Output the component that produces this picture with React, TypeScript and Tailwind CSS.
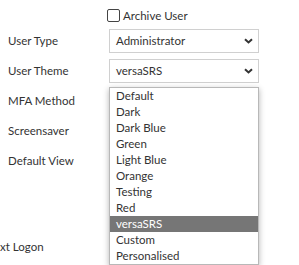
import { useState } from "react";

const THEMES = [
  "Default",
  "Dark",
  "Dark Blue",
  "Green",
  "Light Blue",
  "Orange",
  "Testing",
  "Red",
  "versaSRS",
  "Custom",
  "Personalised",
];

function Chevron() {
  return (
    <svg width="9" height="6" viewBox="0 0 9 6" className="shrink-0">
      <path d="M1 1.2 L4.5 4.5 L8 1.2" fill="none" stroke="#333" strokeWidth="2" />
    </svg>
  );
}

function SelectBox({ value }: { value: string }) {
  return (
    <div className="h-[24px] w-[150px] border border-[#d0d0d0] bg-white flex items-center justify-between pl-[6px] pr-[5px] text-[#333]">
      <span>{value}</span>
      <Chevron />
    </div>
  );
}

export default function App() {
  const [theme] = useState("versaSRS");

  return (
    <div className="relative w-[299px] h-[265px] overflow-hidden bg-white text-[#333] font-['Segoe_UI','Lato',sans-serif] text-[11.5px]">
      <div className="flex flex-col gap-[6px] pt-[8px] pl-[8px]">
        {/* Archive */}
        <div className="flex items-center h-[15px] pl-[99px]">
          <div className="w-[13px] h-[13px] border border-[#444] rounded-[2px] bg-white" />
          <span className="ml-[3px]">Archive User</span>
        </div>

        <div className="flex items-center">
          <span className="w-[101px]">User Type</span>
          <SelectBox value="Administrator" />
        </div>
        <div className="flex items-center">
          <span className="w-[101px]">User Theme</span>
          <SelectBox value={theme} />
        </div>
        <div className="flex items-center h-[24px]">
          <span className="w-[101px]">MFA Method</span>
        </div>
        <div className="flex items-center h-[24px]">
          <span className="w-[101px]">Screensaver</span>
        </div>
        <div className="flex items-center h-[24px]">
          <span className="w-[101px]">Default View</span>
        </div>
        <div className="h-[50px]" />
        <div className="flex items-center h-[24px] -ml-[8px]">
          <span>xt Logon</span>
        </div>
      </div>

      {/* Open theme list */}
      <div className="absolute left-[109px] top-[87px] w-[150px] border border-[#b8b8b8] bg-white shadow-[0_2px_6px_rgba(0,0,0,0.3)]">
        {THEMES.map((t) => (
          <div
            key={t}
            className={
              t === theme
                ? "h-[16px] leading-[16px] pl-[6px] bg-[#767676] text-white"
                : "h-[16px] leading-[16px] pl-[6px] text-[#333]"
            }
          >
            {t}
          </div>
        ))}
      </div>
    </div>
  );
}
